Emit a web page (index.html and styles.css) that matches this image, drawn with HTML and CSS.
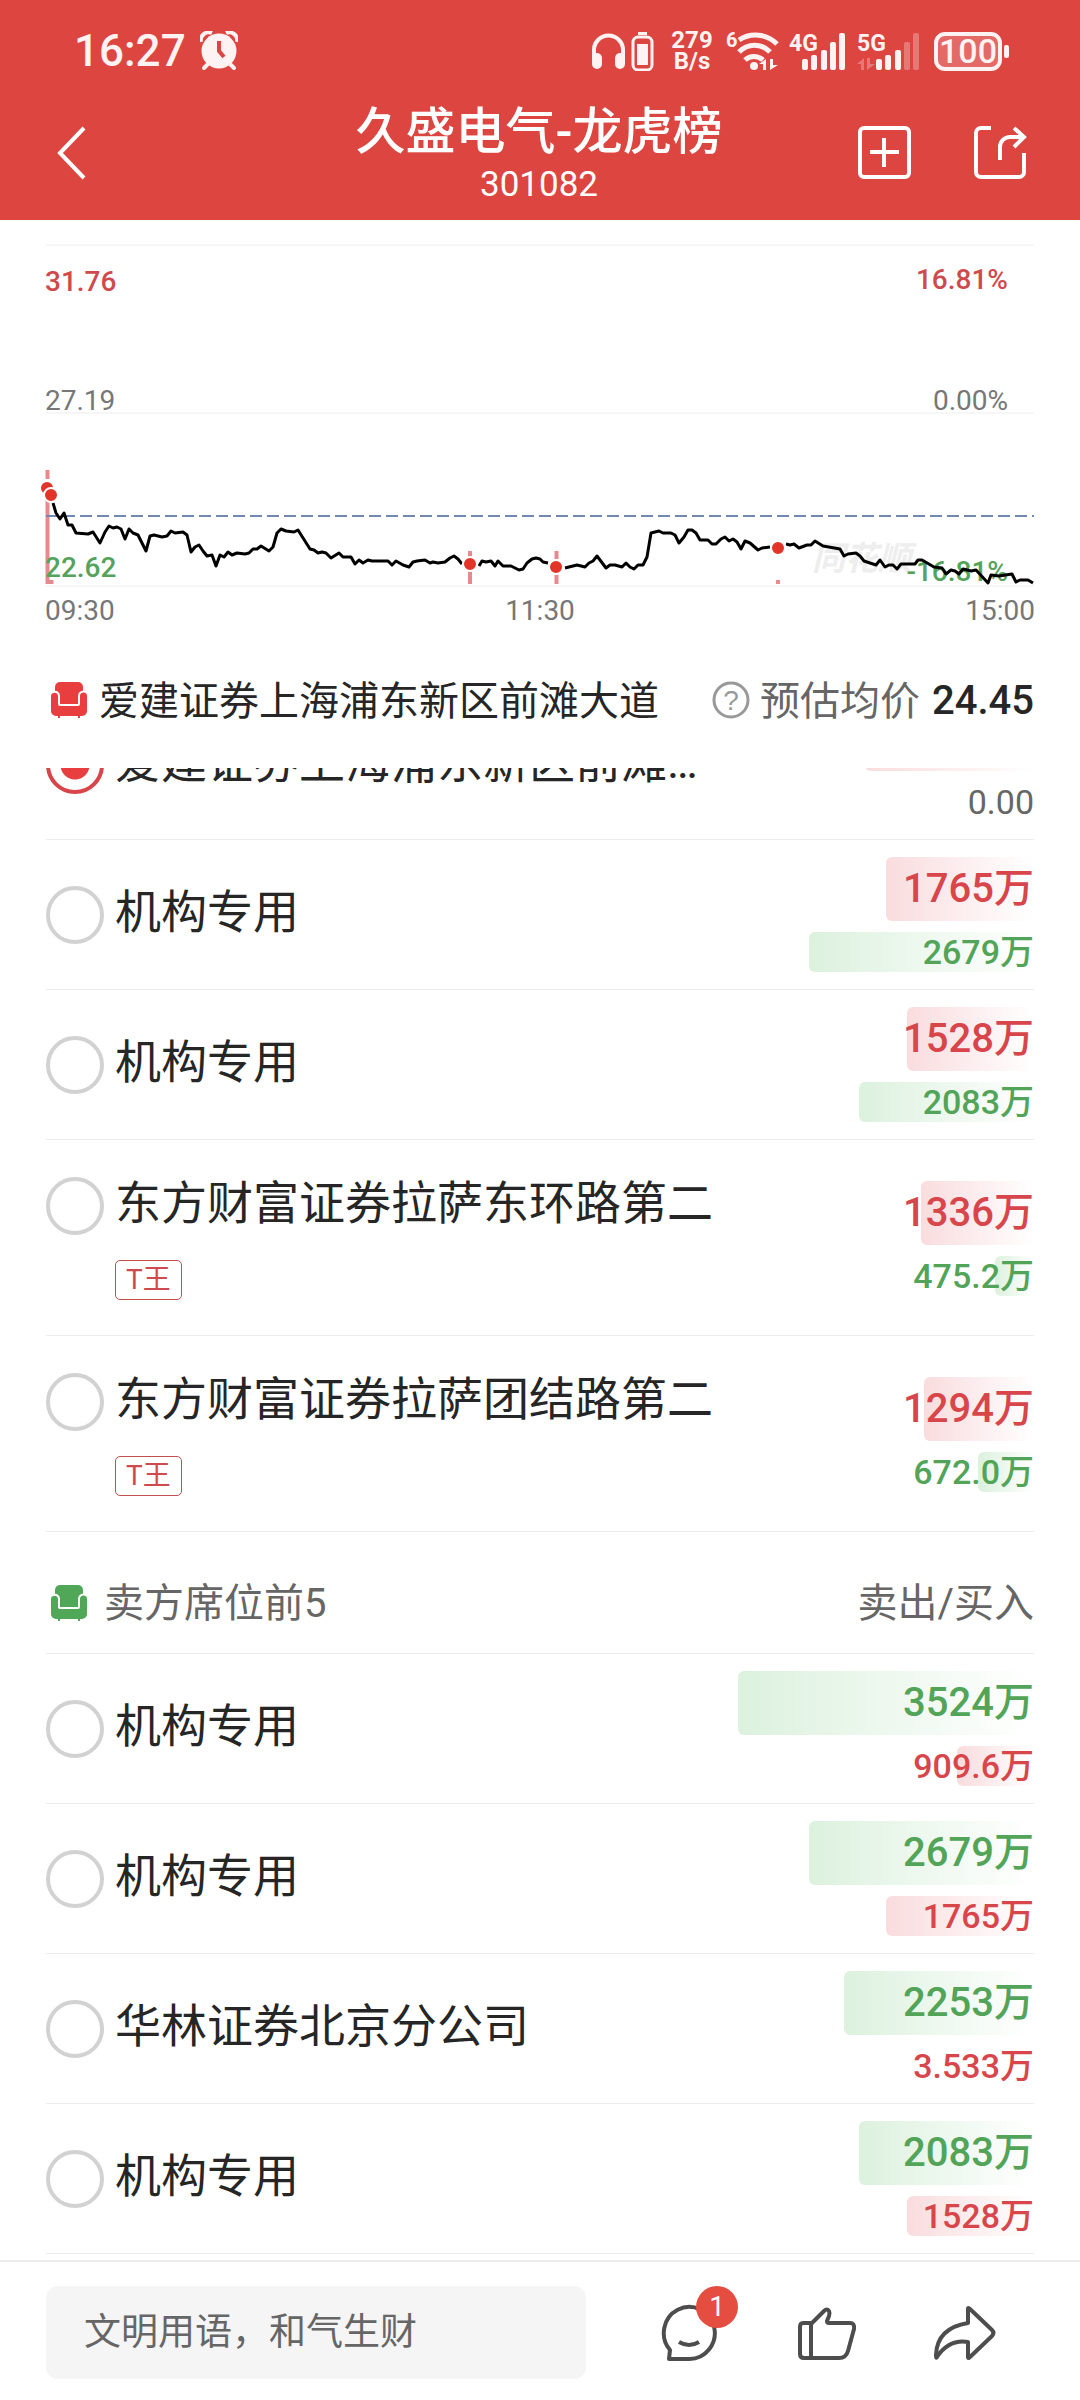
FILE: index.html
```html
<!DOCTYPE html>
<html lang="zh-CN">
<head>
    <meta charset="UTF-8">
    <meta name="viewport" content="width=device-width, initial-scale=1">
    <title>久盛电气-龙虎榜</title>
    <link rel="stylesheet" href="styles.css">
</head>
<body>
<div class="app">
    <header class="header">
        <div class="status">
            <span class="time">16:27</span>
            <svg class="alarm" width="38" height="40" viewBox="0 0 38 40" fill="#fff2f2">
                <circle cx="19" cy="20" r="17.5"/>
                <path d="M1 11a8 8 0 0 1 11-9M37 11a8 8 0 0 0-11-9" fill="none" stroke="#fff2f2" stroke-width="4"/>
                <path d="M8 33l-4 4M30 33l4 4" stroke="#fff2f2" stroke-width="4" stroke-linecap="round"/>
                <path d="M19 10v10l5 6" fill="none" stroke="#dd4540" stroke-width="4"/>
            </svg>
            <div class="status-icons">
                <svg width="68" height="40" viewBox="0 0 68 40" fill="#fff2f2">
                    <path d="M3 28V19a14.5 14.5 0 0 1 29 0v9" fill="none" stroke="#fff2f2" stroke-width="4"/>
                    <rect x="1" y="22" width="10" height="16" rx="5"/>
                    <rect x="24" y="22" width="10" height="16" rx="5"/>
                    <rect x="42" y="6" width="19" height="33" rx="5" fill="none" stroke="#fff2f2" stroke-width="3"/>
                    <rect x="47" y="1" width="9" height="3"/>
                    <rect x="46" y="13" width="11" height="21"/>
                </svg>
                <span class="speed">279<br>B/s</span>
                <svg width="54" height="40" viewBox="0 0 54 40" fill="#fff2f2">
                    <text class="net-six" x="1" y="16">6</text>
                    <g fill="none" stroke="#fff2f2" stroke-width="5">
                        <path d="M14 9a30 30 0 0 1 38 4"/>
                        <path d="M14 21a21 21 0 0 1 31 0"/>
                        <path d="M20 29a13 13 0 0 1 18 0"/>
                    </g>
                    <circle cx="29" cy="35" r="4"/>
                    <path d="M41 28v11h-3v-6h-4zM45 39V28h3v6h5z"/>
                </svg>
                <svg width="58" height="40" viewBox="0 0 58 40" fill="#fff2f2">
                    <text class="net-text" x="0" y="20">4G</text>
                    <rect x="13" y="28" width="6" height="11" rx="2"/>
                    <rect x="22" y="24" width="6" height="15" rx="2"/>
                    <rect x="32" y="19" width="6" height="20" rx="2"/>
                    <rect x="41" y="11" width="6" height="28" rx="2"/>
                    <rect x="50" y="2" width="6" height="37" rx="2"/>
                </svg>
                <svg width="63" height="40" viewBox="0 0 63 40" fill="#fff2f2">
                    <text class="net-text" x="0" y="20">5G</text>
                    <path d="M7 27v12H4v-6H0zM10 39V27h3v6h5z" opacity=".3"/>
                    <rect x="19" y="28" width="6" height="11" rx="2"/>
                    <rect x="28" y="24" width="6" height="15" rx="2"/>
                    <rect x="38" y="19" width="6" height="20" rx="2"/>
                    <rect x="47" y="11" width="6" height="28" rx="2" opacity=".3"/>
                    <rect x="56" y="2" width="6" height="37" rx="2" opacity=".3"/>
                </svg>
                <svg width="80" height="40" viewBox="0 0 80 40" fill="#fff2f2">
                    <rect x="6" y="3" width="64" height="35" rx="9" fill="#e36a66" stroke="#fff2f2" stroke-width="4"/>
                    <rect x="74" y="14" width="5" height="13" rx="2"/>
                    <text class="net-power" x="38" y="32" text-anchor="middle">100</text>
                </svg>
            </div>
        </div>
        <nav class="nav">
            <button class="icon-btn" type="button" aria-label="返回">
                <svg width="40" height="56" viewBox="0 0 40 56"><path d="M34 3L10 28l24 25" fill="none" stroke="#fff" stroke-width="4"/></svg>
            </button>
            <div class="nav-title">
                <h1>久盛电气-龙虎榜</h1>
                <p>301082</p>
            </div>
            <div class="nav-actions">
                <button class="icon-btn" type="button" aria-label="添加">
                    <svg width="56" height="56" viewBox="0 0 56 56" fill="none" stroke="#fff" stroke-width="4">
                        <rect x="4" y="3" width="49" height="49" rx="4"/>
                        <path d="M28 13v29M14 27h29"/>
                    </svg>
                </button>
                <button class="icon-btn" type="button" aria-label="分享">
                    <svg width="56" height="56" viewBox="0 0 56 56" fill="none" stroke="#fff" stroke-width="4">
                        <path d="M19 3H9a5 5 0 0 0-5 5v39a5 5 0 0 0 5 5h38a5 5 0 0 0 5-5V28"/>
                        <path d="M28 35V22a10 10 0 0 1 10-10h13M42 3l10 9-10 10"/>
                    </svg>
                </button>
            </div>
        </nav>
    </header>

    <!-- 分时图 -->
    <svg class="chart" viewBox="0 220 1080 412">
        <path class="grid" d="M46 245H1034M46 413H1034M46 586H1034"/>
        <text class="watermark" x="812" y="570">同花顺</text>
        <text class="up" x="45" y="291">31.76</text>
        <text class="up" x="1008" y="289" text-anchor="end">16.81%</text>
        <text class="flat" x="45" y="410">27.19</text>
        <text class="flat" x="1008" y="410" text-anchor="end">0.00%</text>
        <path class="mark" d="M47.500 470v9M47.500 496v88M51.500 580v4M470 551v8M470 571v13M556.500 551v8M556.500 571v13M778 580v4"/>
        <text class="down" x="45" y="577">22.62</text>
        <text class="down" x="1008" y="581" text-anchor="end">-16.81%</text>
        <path class="average" d="M46 516H1034"/>
        <polyline class="price" points="53,503 56,513 60,519 64,513 68,525 72,525 76,533 88,534 93,532 100,543 105,532 109,526 113,528 117,527 121,529 125,539 129,529 133,533 138,535 146,551 150,536 154,535 162,537 167,536 171,531 175,533 183,532 187,535 191,552 195,547 199,545 203,551 207,556 212,555 216,566 220,555 224,557 228,552 232,555 237,553 245,554 249,553 253,549 257,549 261,546 269,551 273,547 277,533 281,529 286,531 294,532 298,530 310,549 314,550 318,553 322,552 326,553 331,558 339,553 343,557 351,557 355,564 359,560 363,563 368,560 372,561 388,561 392,565 396,561 403,565 409,567 413,562 417,561 425,560 430,563 433,562 438,563 445,562 450,558 454,556 458,559 462,564"/>
        <polyline class="price" points="479,566 482,561 486,562 491,561 495,566 498,561 503,566 511,566 519,570 523,569 527,563 532,559 536,558 540,559 543,562 548,563"/>
        <polyline class="price" points="565,568 577,565 585,567 589,563 593,561 597,556 606,568 610,565 615,565 622,567 626,563 630,567 634,569 638,565 643,565 647,557 651,533 659,531 663,533 671,533 675,535 679,543 684,537 688,530 692,530 696,533 700,540 708,540 712,544 716,544 721,539 725,537 729,541 733,539 737,542 741,549 745,541 750,543 758,550 762,548 770,547"/>
        <polyline class="price" points="786,544 790,545 794,544 799,548 807,545 811,545 815,541 823,546 840,549 844,556 848,554 856,553 860,556 864,561 876,565 880,560 885,567 889,565 893,565 897,569 901,564 915,564 918,560 922,560 934,567 942,568 946,574 951,570 955,571 959,574 963,569 971,571 976,570 988,583 991,575 999,576 1012,574 1016,582 1020,580 1028,580 1033,583"/>
        <g class="dots">
            <circle cx="47" cy="488" r="7"/>
            <circle cx="51" cy="495" r="7"/>
            <circle cx="470" cy="564" r="7"/>
            <circle cx="556" cy="567" r="7"/>
            <circle cx="778" cy="548" r="7"/>
        </g>
        <text class="flat" x="45" y="620">09:30</text>
        <text class="flat" x="540" y="620" text-anchor="middle">11:30</text>
        <text class="flat" x="1035" y="620" text-anchor="end">15:00</text>
    </svg>

    <div class="seat">
        <svg class="sofa red" width="36" height="36" viewBox="0 0 36 36"><use href="#sofa"/></svg>
        <h2>爱建证券上海浦东新区前滩大道</h2>
        <button class="icon-btn" type="button" aria-label="说明">
            <svg width="38" height="38" viewBox="0 0 38 38">
                <circle cx="19" cy="19" r="17" fill="none" stroke="#999" stroke-width="3"/>
                <text class="help" x="19" y="29" text-anchor="middle">?</text>
            </svg>
        </button>
        <span class="seat-label">预估均价</span>
        <strong>24.45</strong>
    </div>

    <main class="list">
        <div class="list-inner">
            <label class="row">
                <input type="radio" name="seat" checked>
                <span class="name">爱建证券上海浦东新区前滩…</span>
                <span class="amounts">
                    <span class="big red"><i style="width:57%"></i><b>2012万</b></span>
                    <span class="small gray"><b>0.00</b></span>
                </span>
            </label>
            <label class="row">
                <input type="radio" name="seat">
                <span class="name">机构专用</span>
                <span class="amounts">
                    <span class="big red"><i style="width:50%"></i><b>1765万</b></span>
                    <span class="small green"><i style="width:76%"></i><b>2679万</b></span>
                </span>
            </label>
            <label class="row">
                <input type="radio" name="seat">
                <span class="name">机构专用</span>
                <span class="amounts">
                    <span class="big red"><i style="width:43%"></i><b>1528万</b></span>
                    <span class="small green"><i style="width:59%"></i><b>2083万</b></span>
                </span>
            </label>
            <label class="row tall">
                <input type="radio" name="seat">
                <span class="name">东方财富证券拉萨东环路第二</span>
                <span class="tag">T王</span>
                <span class="amounts">
                    <span class="big red"><i style="width:38%"></i><b>1336万</b></span>
                    <span class="small green"><i style="width:13%"></i><b>475.2万</b></span>
                </span>
            </label>
            <label class="row tall">
                <input type="radio" name="seat">
                <span class="name">东方财富证券拉萨团结路第二</span>
                <span class="tag">T王</span>
                <span class="amounts">
                    <span class="big red"><i style="width:37%"></i><b>1294万</b></span>
                    <span class="small green"><i style="width:19%"></i><b>672.0万</b></span>
                </span>
            </label>

            <div class="group">
                <svg class="sofa green" width="36" height="36" viewBox="0 0 36 36"><use href="#sofa"/></svg>
                <h3>卖方席位前5</h3>
                <span class="group-label">卖出/买入</span>
            </div>

            <label class="row">
                <input type="radio" name="seat">
                <span class="name">机构专用</span>
                <span class="amounts">
                    <span class="big green"><i style="width:100%"></i><b>3524万</b></span>
                    <span class="small red"><i style="width:26%"></i><b>909.6万</b></span>
                </span>
            </label>
            <label class="row">
                <input type="radio" name="seat">
                <span class="name">机构专用</span>
                <span class="amounts">
                    <span class="big green"><i style="width:76%"></i><b>2679万</b></span>
                    <span class="small red"><i style="width:50%"></i><b>1765万</b></span>
                </span>
            </label>
            <label class="row">
                <input type="radio" name="seat">
                <span class="name">华林证券北京分公司</span>
                <span class="amounts">
                    <span class="big green"><i style="width:64%"></i><b>2253万</b></span>
                    <span class="small red"><b>3.533万</b></span>
                </span>
            </label>
            <label class="row">
                <input type="radio" name="seat">
                <span class="name">机构专用</span>
                <span class="amounts">
                    <span class="big green"><i style="width:59%"></i><b>2083万</b></span>
                    <span class="small red"><i style="width:43%"></i><b>1528万</b></span>
                </span>
            </label>
        </div>
    </main>

    <footer class="footer">
        <input class="comment" type="text" placeholder="文明用语，和气生财" aria-label="评论">
        <div class="tools">
            <button class="icon-btn" type="button" aria-label="评论列表">
                <svg width="60" height="60" viewBox="0 0 60 60" fill="none" stroke="#4d4d4d" stroke-width="4" stroke-linejoin="round">
                    <path d="M29 57H9l1-9A25.500 26 0 1 1 29 57z"/>
                    <path d="M19 40q10 6 20 0"/>
                </svg>
                <span class="badge">1</span>
            </button>
            <button class="icon-btn" type="button" aria-label="点赞">
                <svg width="60" height="60" viewBox="0 0 60 60" fill="none" stroke="#4d4d4d" stroke-width="4" stroke-linejoin="round">
                    <path d="M6 21h9L27 9q3-3 5 0 1 2 0 5l-2 5q0 2 2 2h21q5 0 4 6l-6 22q-2 7-9 7H7q-4 0-4-4V25q0-4 3-4z"/>
                    <path d="M14 21v35"/>
                </svg>
            </button>
            <button class="icon-btn" type="button" aria-label="转发">
                <svg width="62" height="60" viewBox="0 0 62 60" fill="none" stroke="#4d4d4d" stroke-width="4" stroke-linejoin="round">
                    <path d="M34 7q0-2 2 0l22 21q3 3 0 6L36 55q-2 2-2 0V40Q15 37 3 55q-1 2-1-2Q3 26 34 21z"/>
                </svg>
            </button>
        </div>
    </footer>
</div>

<!-- 沙发图标 -->
<svg class="defs" width="0" height="0">
    <symbol id="sofa" viewBox="0 0 36 36">
        <rect x="4" y="0" width="28" height="24" rx="5"/>
        <path d="M3 11a3 3 0 0 1 4 3v8a2 2 0 0 0 2 2h18a2 2 0 0 0 2-2v-8a3 3 0 0 1 7 0v15a5 5 0 0 1-5 5H5a5 5 0 0 1-5-5V14a3 3 0 0 1 3-3z" stroke="#fff" stroke-width="4" paint-order="stroke"/>
        <path d="M7 33h2v3H7zM27 33h2v3h-2z"/>
    </symbol>
</svg>
</body>
</html>
```
FILE: styles.css
```css
* {
    box-sizing: border-box;
    margin: 0;
    padding: 0;
}

body {
    font-family: Roboto, "Noto Sans CJK SC", sans-serif;
    font-size: 40px;
    color: #262626;
    background: #fff;
}

svg {
    display: block;
}

.app {
    height: 100vh;
    display: flex;
    flex-direction: column;
}

.icon-btn {
    position: relative;
    border: 0;
    background: none;
    cursor: pointer;
}

/* 顶部 */
.header {
    height: 220px;
    flex: none;
    color: #fff;
    background: #dd4540;
}

.status {
    height: 96px;
    padding: 6px 70px 0 74px;
    display: flex;
    align-items: center;
    color: #fff2f2;
}

.time {
    font-size: 44px;
    font-weight: 500;
}

.alarm {
    margin-left: 14px;
}

.status-icons {
    margin-left: auto;
    display: flex;
    align-items: center;
    gap: 10px;
}

.speed {
    width: 46px;
    font-size: 24px;
    line-height: 21px;
    font-weight: 700;
    text-align: center;
}

.net-six {
    font-size: 20px;
    font-weight: 700;
}

.net-text {
    font-size: 23px;
    font-weight: 700;
}

.net-power {
    font-size: 34px;
    font-weight: 500;
}

.nav {
    height: 114px;
    padding: 0 52px 0 50px;
    display: grid;
    grid-template-columns: 1fr auto 1fr;
    align-items: center;
}

.nav .icon-btn {
    justify-self: start;
}

.nav-title {
    padding-top: 8px;
    text-align: center;
}

.nav-title h1 {
    font-size: 50px;
    line-height: 56px;
    font-weight: 500;
}

.nav-title p {
    font-size: 35px;
    line-height: 50px;
}

.nav-actions {
    justify-self: end;
    display: flex;
    gap: 60px;
}

/* 分时图 */
.chart {
    width: 100%;
    flex: none;
    font-size: 28px;
}

.grid {
    stroke: #ededed;
}

.up {
    fill: #cf4a4c;
    font-weight: 500;
}

.flat {
    fill: #777;
}

.down {
    fill: #55a35b;
    font-weight: 500;
}

.watermark {
    fill: #eee;
    font-size: 33px;
    font-weight: 700;
    font-style: italic;
}

.mark {
    stroke: #e58a8e;
    stroke-width: 4;
}

.average {
    stroke: #7388b0;
    stroke-width: 2;
    stroke-dasharray: 12 5;
}

.price {
    fill: none;
    stroke: #000;
    stroke-width: 3;
    stroke-linejoin: round;
}

.dots {
    fill: #e23428;
    stroke: #fff;
    stroke-width: 2;
}

/* 当前席位 */
.seat {
    height: 136px;
    flex: none;
    padding: 0 46px 0 51px;
    display: flex;
    align-items: center;
}

.seat h2 {
    margin-left: 12px;
    margin-right: auto;
    padding-bottom: 4px;
    font-size: 40px;
    font-weight: 400;
}

.help {
    font-size: 28px;
    fill: #999;
}

.seat-label {
    margin: 0 12px 0 10px;
    padding-bottom: 4px;
    color: #666;
}

.seat strong {
    font-weight: 500;
}

.sofa.red {
    fill: #e83e40;
}

.sofa.green {
    fill: #4fa757;
}

/* 席位列表 */
.list {
    flex: 1;
    min-height: 0;
    overflow: hidden;
}

.list-inner {
    margin-top: -78px;
    padding: 0 46px;
}

.row {
    min-height: 150px;
    display: grid;
    grid-template-columns: 58px 1fr 30%;
    align-content: center;
    align-items: center;
    column-gap: 11px;
    border-bottom: 1px solid #ebebeb;
}

.tall {
    min-height: 196px;
    padding-top: 2px;
    row-gap: 25px;
}

.row input {
    width: 58px;
    height: 58px;
    appearance: none;
    border: 4px solid #d2d2d2;
    border-radius: 50%;
}

.row input:checked {
    border-color: #d8454a;
    background: radial-gradient(circle, #e83e40 14px, #fff 15px);
}

.name {
    padding-bottom: 6px;
    font-size: 46px;
    line-height: 52px;
    white-space: nowrap;
}

.tag {
    grid-column: 2;
    grid-row: 2;
    justify-self: start;
    padding: 0 10px;
    font-size: 28px;
    line-height: 38px;
    color: #cf4a4c;
    border: 1px solid #c0504f;
    border-radius: 5px;
}

.amounts {
    grid-column: 3;
    grid-row: 1;
    display: grid;
    gap: 11px;
}

.tall .amounts {
    grid-row: 1 / 3;
}

.big,
.small {
    position: relative;
    text-align: right;
}

.big {
    font-size: 40px;
    line-height: 64px;
}

.small {
    font-size: 34px;
    line-height: 40px;
}

/* 金额背景条 */
.amounts i {
    position: absolute;
    top: 0;
    right: 0;
    bottom: 0;
    border-radius: 6px 0 0 6px;
}

.amounts b {
    position: relative;
    font-weight: 500;
}

.amounts .red {
    color: #d8454a;
}

.amounts .green {
    color: #52a459;
}

.amounts .gray b {
    color: #666;
    font-weight: 400;
}

.red i {
    background: linear-gradient(to right, #f9dcde, #fff);
}

.green i {
    background: linear-gradient(to right, #dcf1de, #fff);
}

.group {
    height: 122px;
    padding: 20px 0 0 5px;
    display: flex;
    align-items: center;
    color: #666;
    border-bottom: 1px solid #ebebeb;
}

.group h3 {
    margin-left: 17px;
    margin-right: auto;
    padding-bottom: 6px;
    font-size: 40px;
    font-weight: 400;
}

.group-label {
    padding-bottom: 6px;
}

/* 底部 */
.footer {
    height: 140px;
    flex: none;
    padding: 2px 84px 0 46px;
    display: flex;
    align-items: center;
    gap: 74px;
    border-top: 2px solid #ebebeb;
}

.comment {
    flex: 1;
    min-width: 0;
    height: 93px;
    padding: 0 38px;
    border: 0;
    border-radius: 12px;
    background: #f5f5f5;
    font-family: inherit;
    font-size: 37px;
}

.comment::placeholder {
    color: #666;
}

.tools {
    display: flex;
    gap: 77px;
}

.badge {
    position: absolute;
    top: -16px;
    right: -18px;
    width: 42px;
    height: 42px;
    border-radius: 50%;
    font-size: 28px;
    line-height: 42px;
    font-family: Roboto, sans-serif;
    color: #fff;
    background: #e54d40;
}

.defs {
    position: absolute;
}
```
